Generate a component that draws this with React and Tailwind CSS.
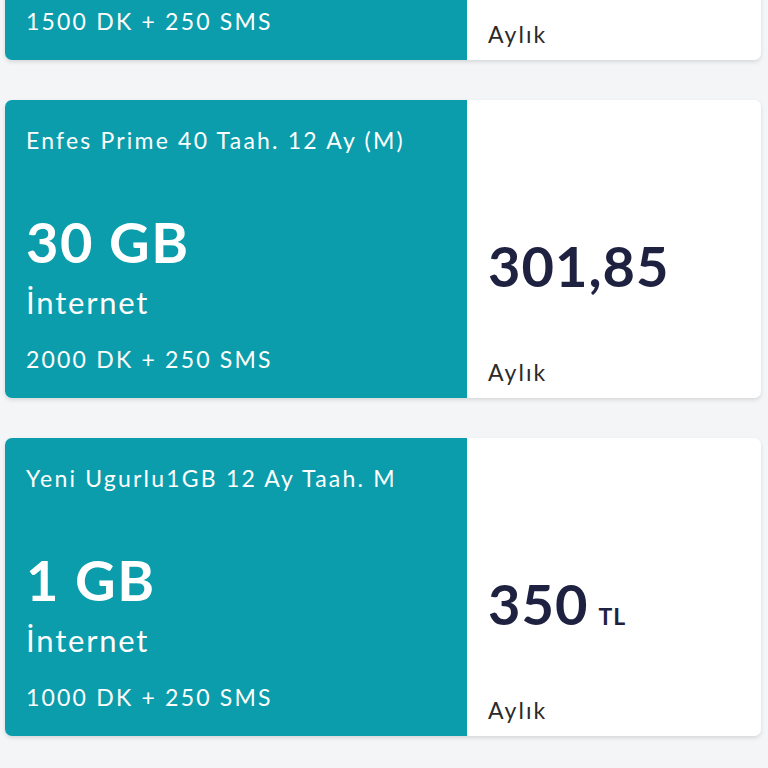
import React from "react";

const plans = [
  { title: "Placeholder", gb: "10 GB", dk: "1500 DK + 250 SMS", price: "000", tl: false },
  { title: "Enfes Prime 40 Taah. 12 Ay (M)", gb: "30 GB", dk: "2000 DK + 250 SMS", price: "301,85", tl: false },
  { title: "Yeni Ugurlu1GB 12 Ay Taah. M", gb: "1 GB", dk: "1000 DK + 250 SMS", price: "350", tl: true },
];

function Card({ p, first }) {
  return (
    <div
      className={`grid grid-cols-[462px_1fr] h-[298px] rounded-[7px] overflow-hidden shadow-[0_2px_4px_rgba(0,0,0,0.12)] ${first ? "mt-[-238px]" : ""}`}
    >
      <div className="bg-[#0b9dab] text-white pl-[21px] pt-[25px] flex flex-col">
        <div className="text-[23px] leading-[30px] tracking-[2.2px] whitespace-nowrap">{p.title}</div>
        <div className="mt-[57px] text-[56px] leading-[60px] font-bold tracking-[1.5px]">{p.gb}</div>
        <div className="mt-[12px] text-[31px] leading-[36px] tracking-[1.8px]">İnternet</div>
        <div className="mt-[24px] text-[23px] leading-[30px] tracking-[2.2px] whitespace-nowrap">{p.dk}</div>
      </div>
      <div className="bg-white pl-[21px] pt-[136px] pb-[11px] flex flex-col">
        <div className="flex items-baseline gap-[10px] text-[#1e2240] font-bold">
          <span className="text-[56px] leading-[60px] tracking-[1px]">{p.price}</span>
          {p.tl && <span className="text-[23px] tracking-[1px]">TL</span>}
        </div>
        <div className="mt-auto text-[23px] leading-[30px] tracking-[2px] text-[#2a2a2a]">Aylık</div>
      </div>
    </div>
  );
}

export default function App() {
  return (
    <div
      className="w-[768px] h-[768px] overflow-hidden bg-[#f4f5f7] pl-[5px] pr-[7px]"
      style={{ fontFamily: "Lato, 'Noto Sans', sans-serif" }}
    >
      <div className="flex flex-col gap-[40px]">
        {plans.map((p, i) => (
          <Card key={i} p={p} first={i === 0} />
        ))}
      </div>
    </div>
  );
}
